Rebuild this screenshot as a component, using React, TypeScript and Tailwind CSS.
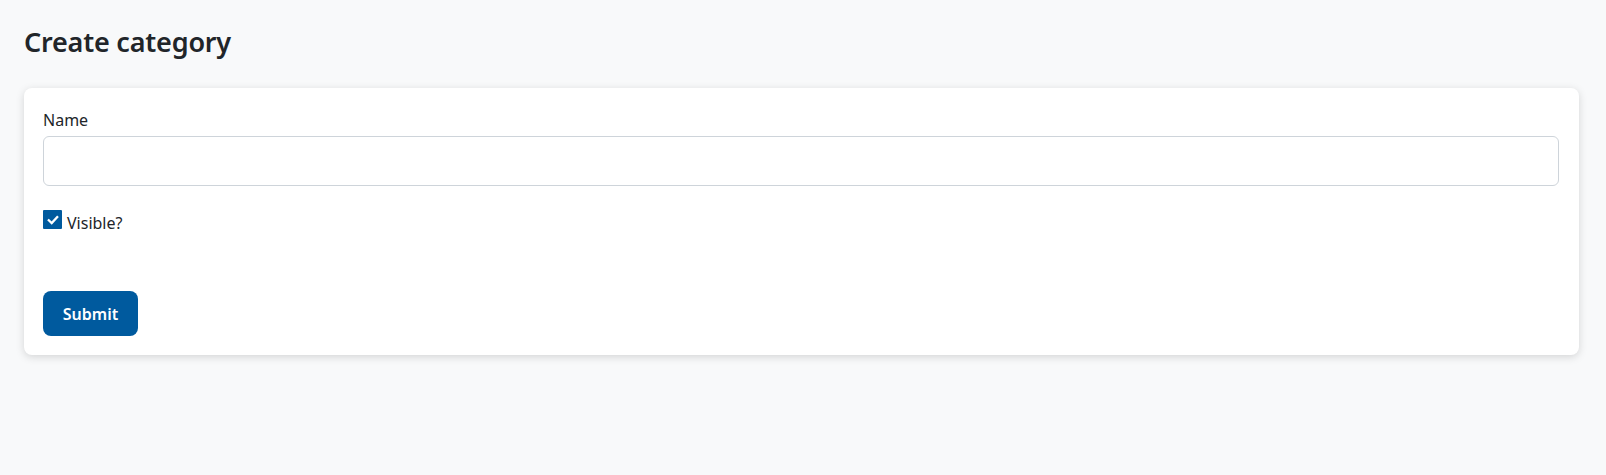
import { useState } from "react";

export default function App() {
  const [name, setName] = useState("");
  const [visible, setVisible] = useState(true);

  return (
    <div
      className="min-h-screen bg-[#f8f9fa] pl-6 pr-[27px] pt-6 text-[#212529]"
      style={{ fontFamily: '"Noto Sans", "Open Sans", sans-serif' }}
    >
      <h1 className="text-[27px] font-semibold leading-[36px] tracking-[-0.2px] mb-[28px]">Create category</h1>

      <form
        onSubmit={(e) => e.preventDefault()}
        className="bg-white rounded-lg shadow-[0_2px_8px_rgba(0,0,0,0.15)] pl-[19px] pr-[20px] pt-[20px] pb-[19px]"
      >
        {/* Name */}
        <label className="block text-[16px] leading-6 mb-[4px]">Name</label>
        <input
          type="text"
          value={name}
          onChange={(e) => setName(e.target.value)}
          className="block w-full h-[50px] border border-[#ced4da] rounded-md px-3 outline-none"
        />

        {/* Visible */}
        <label className="flex items-start gap-[5px] mt-[24px] text-[16px] leading-6 cursor-pointer">
          <span
            onClick={() => setVisible(!visible)}
            className="w-[19px] h-[19px] rounded-[1px] bg-[#005a9e] flex items-center justify-center"
          >
            {visible && (
              <svg width="12" height="12" viewBox="0 0 12 12" fill="none">
                <path d="M1.8 6.3 L4.7 9 L10.2 3" stroke="white" strokeWidth="2.3" strokeLinecap="square" />
              </svg>
            )}
          </span>
          <span className="mt-[1px]">Visible?</span>
        </label>

        <button
          type="submit"
          className="mt-[56px] h-[45px] w-[95px] bg-[#005a9e] text-white font-semibold text-[16px] rounded-lg"
        >
          Submit
        </button>
      </form>
    </div>
  );
}
